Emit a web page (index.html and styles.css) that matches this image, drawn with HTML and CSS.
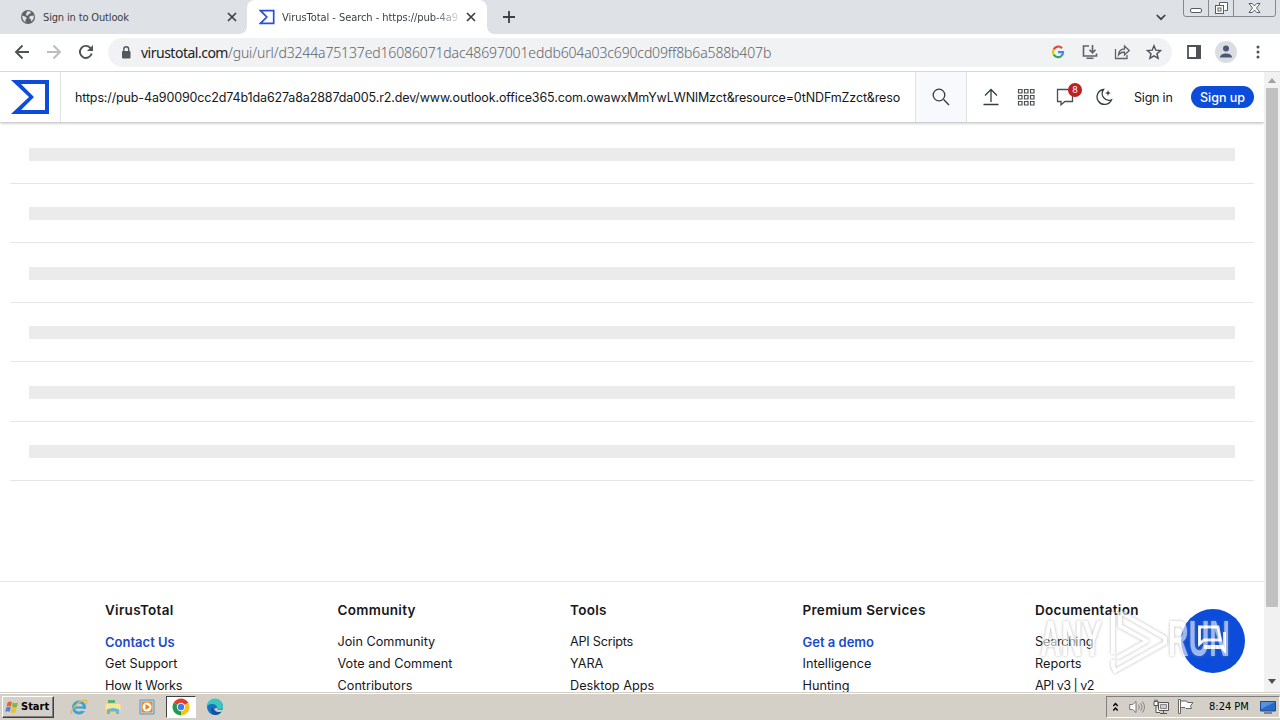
FILE: index.html
```html
<!DOCTYPE html>
<html lang="en">
<head>
    <meta charset="UTF-8">
    <title>VirusTotal - Search</title>
    <link rel="stylesheet" href="styles.css">
</head>
<body>
    <div class="tabstrip">
        <div class="tab">
            <svg class="tab-icon" width="16" height="16" viewBox="0 0 16 16"><circle cx="8" cy="8" r="7" fill="#5f6368"/><path d="M2.2 6.5l3.5 1.2 1.2 1.8-1.5 1.2.2 2.6C3.500 12 2 10 2.200 6.500zM7.500 2.200l3 .4.3 1.700-2 .8-1 1.600-1.800-.5.2-2zM10 7l3.800-.5c.4 2.600-.8 4.800-2.600 6l-.4-2.200L9 9z" fill="#dee1e6"/></svg>
            <span class="tab-title">Sign in to Outlook</span>
            <svg class="close" width="10" height="10" viewBox="0 0 10 10"><path d="M1 1l8 8M9 1L1 9" stroke="#3c4043" stroke-width="1.7"/></svg>
        </div>
        <div class="tab active">
            <svg class="tab-icon" width="16" height="16" viewBox="0 0 16 16"><path d="M1.500 1.700h13.200v12.600H1.500L7.800 8z" fill="none" stroke="#2b50d8" stroke-width="1.700"/></svg>
            <span class="tab-title fade">VirusTotal - Search - https://pub-4a9</span>
            <svg class="close" width="10" height="10" viewBox="0 0 10 10"><path d="M1 1l8 8M9 1L1 9" stroke="#3c4043" stroke-width="1.7"/></svg>
        </div>
        <svg class="new-tab" width="12" height="12" viewBox="0 0 12 12"><path d="M6 0v12M0 6h12" stroke="#3c4043" stroke-width="1.8"/></svg>
        <svg class="tab-search" width="10" height="7" viewBox="0 0 10 7"><path d="M.8 1L5 5.200 9.200 1" fill="none" stroke="#3c4043" stroke-width="1.700"/></svg>
        <svg class="window-buttons" width="94" height="17" viewBox="0 0 94 17"><path d="M.5 0v14q0 2.500 2.500 2.500h87q2.500 0 2.500-2.500V0M25.500 0v16M50.500 0v16" fill="none" stroke="#858a91"/><rect x="7.500" y="8.500" width="11" height="4" rx="1.500" fill="#fff" stroke="#555b63"/><path d="M36.500 5V2.500h8v8h-3" fill="#fff" stroke="#555b63"/><rect x="32.500" y="5.500" width="8" height="8" fill="#fff" stroke="#555b63"/><rect x="35" y="8" width="3" height="3" fill="#fff" stroke="#555b63"/><path d="M66 3.500h3.200l2.300 2.400 2.300-2.400H77l-3.500 4.500 3.500 4.500h-3.200l-2.300-2.400-2.300 2.400H66L69.500 8z" fill="#fff" stroke="#555b63"/></svg>
    </div>

    <div class="toolbar">
        <svg class="nav-icon" width="16" height="16" viewBox="0 0 16 16"><path d="M15 8H2M8.500 1.500L2 8l6.500 6.500" fill="none" stroke="#4e5256" stroke-width="1.900"/></svg>
        <svg class="nav-icon" width="16" height="16" viewBox="0 0 16 16"><path d="M1 8h13M7.500 1.500L14 8l-6.500 6.500" fill="none" stroke="#babcbe" stroke-width="1.900"/></svg>
        <svg class="nav-icon" width="16" height="16" viewBox="0 0 16 16"><path d="M13.700 9.500A6 6 0 1 1 12.300 3.800L14 5.500" fill="none" stroke="#4e5256" stroke-width="1.900"/><path d="M15 1v6H9z" fill="#4e5256"/></svg>
        <div class="omnibox">
            <svg class="lock" width="10" height="13" viewBox="0 0 10 13"><rect x="1" y="5" width="8.500" height="7.500" rx="1" fill="#54585d"/><path d="M2.800 5.500V3.200a2.400 2.400 0 0 1 4.900 0v2.300" fill="none" stroke="#54585d" stroke-width="1.400"/></svg>
            <span class="url"><b>virustotal.com</b>/gui/url/d3244a75137ed16086071dac48697001eddb604a03c690cd09ff8b6a588b407b</span>
            <svg width="14" height="14" viewBox="0 0 14 14"><g fill="none" stroke-width="2.200"><path d="M11 3.200A5 5 0 0 0 2.700 4.500" stroke="#ea4335"/><path d="M2.700 4.500a5 5 0 0 0 0 5" stroke="#fbbc05"/><path d="M2.700 9.500a5 5 0 0 0 7.300 1.800" stroke="#34a853"/><path d="M10 11.300A5 5 0 0 0 12 7.200H7" stroke="#4285f4"/></g></svg>
            <svg width="16" height="16" viewBox="0 0 16 16"><path d="M7 2H1.500v10h13V9.500M4.500 14.200h7M10.500 1v7.500M7.500 5.800l3 3 3-3" fill="none" stroke="#5f6368" stroke-width="1.600"/></svg>
            <svg width="16" height="16" viewBox="0 0 16 16"><path d="M1.500 5v9.500h11.500V11M4.500 11c.3-4 2.500-6 6-6V2l4.700 4.500-4.700 4.500V8C8 8 6 8.800 4.500 11z" fill="none" stroke="#5f6368" stroke-width="1.300"/></svg>
            <svg width="16" height="16" viewBox="0 0 16 16"><path d="M8 1.800l1.800 4.400 4.800.4-3.600 3.100 1.100 4.700L8 11.900l-4.100 2.500L5 9.700 1.400 6.600l4.800-.4z" fill="none" stroke="#4e5256" stroke-width="1.400"/></svg>
        </div>
        <svg class="side-panel" width="14" height="14" viewBox="0 0 14 14"><path d="M1 1h12v12H1z" fill="none" stroke="#4e5256" stroke-width="1.800"/><path d="M9 1h5v12H9z" fill="#4e5256"/></svg>
        <svg class="avatar" width="22" height="22" viewBox="0 0 22 22"><circle cx="11" cy="11" r="11" fill="#dadde2"/><circle cx="11" cy="7.500" r="3" fill="#4a5878"/><path d="M5 16.500c0-5.300 12-5.300 12 0z" fill="#4a5878"/></svg>
        <svg class="menu-dots" width="4" height="14" viewBox="0 0 4 14"><g fill="#4e5256"><circle cx="2" cy="2" r="1.500"/><circle cx="2" cy="7" r="1.500"/><circle cx="2" cy="12" r="1.500"/></g></svg>
    </div>

    <div class="viewport">
        <div class="page">
            <header class="header">
                <a class="logo"><svg width="39" height="34" viewBox="0 0 39 34"><path fill-rule="evenodd" d="M0 0h38v34H0l18-17zM10 4l13 13-13 13h24V4z" fill="#0b4dda"/></svg></a>
                <div class="search-text">https://pub-4a90090cc2d74b1da627a8a2887da005.r2.dev/www.outlook.office365.com.owawxMmYwLWNlMzct&amp;resource=0tNDFmZzct&amp;reso</div>
                <div class="search-button"><svg width="18" height="18" viewBox="0 0 18 18"><path d="M11.600 11.600L17 17" stroke="#363c43" stroke-width="1.400"/><circle cx="7" cy="7" r="5.800" fill="none" stroke="#363c43" stroke-width="1.300"/></svg></div>
                <nav class="actions">
                    <svg width="16" height="18" viewBox="0 0 16 18"><path d="M8 14V1.500M2 7.500l6-6 6 6M.5 16.500h15" fill="none" stroke="#363c43" stroke-width="1.300"/></svg>
                    <svg class="apps" width="18" height="18" viewBox="0 0 18 18"><path d="M1.500 1.500h3.500v3.500h-3.500zM7.500 1.500h3.500v3.500h-3.500zM13.500 1.500h3.500v3.500h-3.500zM1.500 7.500h3.500v3.500h-3.500zM7.500 7.500h3.500v3.500h-3.500zM13.500 7.500h3.500v3.500h-3.500zM1.500 13.500h3.500v3.500h-3.500zM7.500 13.500h3.500v3.500h-3.500zM13.500 13.500h3.500v3.500h-3.500z" fill="none" stroke="#4b5056" stroke-width="1.200"/></svg>
                    <div class="notifications">
                        <svg width="18" height="18" viewBox="0 0 18 18"><path d="M1.500 1.500h15v12H9l-4 3.300v-3.300H1.500z" fill="none" stroke="#4b5056" stroke-width="1.300"/></svg>
                        <span class="badge">8</span>
                    </div>
                    <svg class="moon" width="18" height="18" viewBox="0 0 18 18"><path d="M8.500 1.500a7.500 7.500 0 1 0 8 10.300A6.800 6.800 0 0 1 8.500 1.500z" fill="none" stroke="#363c43" stroke-width="1.300"/><path d="M13 2l.8 2.200 2.200.8-2.200.8L13 8l-.8-2.200L10 5l2.200-.8z" fill="#363c43"/></svg>
                    <span class="sign-in">Sign in</span>
                    <span class="sign-up">Sign up</span>
                </nav>
            </header>

            <main class="results">
                <div class="row"><div class="bar"></div></div>
                <div class="row"><div class="bar"></div></div>
                <div class="row"><div class="bar"></div></div>
                <div class="row"><div class="bar"></div></div>
                <div class="row"><div class="bar"></div></div>
                <div class="row"><div class="bar"></div></div>
            </main>

            <footer class="footer">
                <div class="col">
                    <h4>VirusTotal</h4>
                    <a class="primary">Contact Us</a>
                    <a>Get Support</a>
                    <a class="tight">How It Works</a>
                </div>
                <div class="col">
                    <h4>Community</h4>
                    <a>Join Community</a>
                    <a>Vote and Comment</a>
                    <a>Contributors</a>
                </div>
                <div class="col">
                    <h4>Tools</h4>
                    <a class="tight">API Scripts</a>
                    <a>YARA</a>
                    <a>Desktop Apps</a>
                </div>
                <div class="col">
                    <h4>Premium Services</h4>
                    <a class="primary">Get a demo</a>
                    <a>Intelligence</a>
                    <a>Hunting</a>
                </div>
                <div class="col">
                    <h4>Documentation</h4>
                    <a class="tight">Searching</a>
                    <a>Reports</a>
                    <a class="tighter">API v3 | v2</a>
                </div>
            </footer>

            <div class="chat"><svg width="34" height="32" viewBox="0 0 34 32"><path d="M4.500 3H23l2.500 13H9l-4.500 4z" fill="none" stroke="#fff" stroke-width="2.800"/><path d="M28 8h3v22l-5-5H9v-4h19z" fill="#fff"/></svg></div>
            <svg class="watermark" width="200" height="72" viewBox="0 0 200 72">
                <text x="4" y="51" textLength="62" lengthAdjust="spacingAndGlyphs">ANY</text>
                <path d="M77 7v42M84 7v14l27 15-30 17M84 7l45 26v5L79 66l-2-5V55" fill="none" stroke="#fff" stroke-width="4" stroke-linejoin="round"/>
                <text x="132" y="51" textLength="62" lengthAdjust="spacingAndGlyphs">RUN</text>
            </svg>
        </div>
        <div class="scrollbar">
            <svg width="8" height="5" viewBox="0 0 8 5"><path d="M4 0l4 5H0z" fill="#a3a3a3"/></svg>
            <div class="thumb"></div>
            <svg class="down" width="8" height="5" viewBox="0 0 8 5"><path d="M4 5L0 0h8z" fill="#505050"/></svg>
        </div>
    </div>

    <div class="taskbar">
        <div class="start">
            <svg width="15" height="16" viewBox="0 0 17 16"><path d="M3 2.500c2-1.300 3.500-1 5 0L6.800 7.500c-1.600-1-3-1-5 0z" fill="#e8622c"/><path d="M9 3c2 1 3.700 1 5.700 0l-1.300 5c-2 1-3.700 1-5.500 0z" fill="#79b943"/><path d="M1.600 8.500c2-1 3.400-1 5 0L5.300 13.500c-1.500-1-3-1-5 0z" fill="#4b86cf"/><path d="M7.700 9c1.800 1 3.500 1 5.500 0l-1.400 5c-2 1-3.700 1-5.500 0z" fill="#f3bd2e"/></svg>
            <span>Start</span>
        </div>
        <div class="launch">
            <svg width="18" height="18" viewBox="0 0 18 18"><circle cx="9" cy="9.500" r="5.500" fill="none" stroke="#39a3dc" stroke-width="3"/><path d="M5 9.500h9.500" stroke="#39a3dc" stroke-width="2.200"/><path d="M12 12h4" stroke="#d4d0c8" stroke-width="2"/><path d="M2 16C-1 13 10 .5 16 2.500c1 .5.800 2 0 3.500" fill="none" stroke="#e5bb45" stroke-width="1.400"/></svg>
        </div>
        <div class="launch">
            <svg width="18" height="18" viewBox="0 0 18 18"><path d="M2 3h6l1 2h6v10H2z" fill="#f2d36b"/><path d="M4 2h7v3H4z" fill="#5fae72"/><path d="M1.500 6h15v6h-15z" fill="#f9e798"/><path d="M3 16v-4.500q6-3 12 0V16h-3v-2.500H6V16z" fill="#65b7de"/></svg>
        </div>
        <div class="launch">
            <svg width="18" height="18" viewBox="0 0 18 18"><path d="M2 2h14v14H2z" fill="#b9dbef" stroke="#5796c7"/><rect x="3.500" y="3.500" width="11" height="11" rx="1" fill="#ef8a22"/><circle cx="9" cy="9" r="4.500" fill="#fff"/><path d="M7.500 6l4.500 3-4.500 3z" fill="#ee7c12"/></svg>
        </div>
        <div class="launch running">
            <svg width="18" height="18" viewBox="0 0 18 18"><path d="M9 9L1.640 4.750A8.500 8.500 0 0 1 16.360 4.750L9 9z" fill="#e33b2e"/><path d="M9 9l7.360-4.250A8.500 8.500 0 0 1 9 17.500z" fill="#fbc116"/><path d="M9 9v8.500A8.500 8.500 0 0 1 1.640 4.750z" fill="#229b48"/><circle cx="9" cy="9" r="4.200" fill="#fff"/><circle cx="9" cy="9" r="3.200" fill="#3c7ee8"/></svg>
        </div>
        <div class="launch">
            <svg width="18" height="18" viewBox="0 0 18 18"><circle cx="9" cy="9" r="8" fill="#1475c4"/><path d="M1 8a8 8 0 0 1 16 1c0 3-5 3.500-6 1.500C12 7 6 4 1 8z" fill="#3cc6bd"/><path d="M7 9c-1 4 3 6.500 8.500 4.500-1 2-3.500 3.500-6.500 3.500C4 16 4 10 7 9z" fill="#155299"/><path d="M11 10c0 2.500 3.500 2.500 6 1.500l-1 2c-4 1-7.500 0-7.500-3z" fill="#d4d0c8"/></svg>
        </div>
        <div class="tray">
            <svg class="expand" width="5" height="10" viewBox="0 0 5 10"><path d="M.3 4l2.200-2.400L4.700 4M.3 8.500l2.200-2.400 2.200 2.400" fill="none" stroke="#000" stroke-width="1.400"/></svg>
            <svg class="volume" width="16" height="14" viewBox="0 0 16 14"><path d="M.7 4.500h3L7 1.500v11l-3.300-3h-3z" fill="#fff" stroke="#777"/><path d="M9.500 4.500q1.800 2.500 0 5M11.700 3q3 4 0 8M13.500 1.500q4 5.500 0 11" fill="none" stroke="#888"/></svg>
            <svg class="network" width="16" height="16" viewBox="0 0 16 16"><path d="M5.500 3.500h10v8h-10zM7 14.500h7M10.500 12v2" fill="#eee" stroke="#555"/><path d="M7.500 5.500h6v4h-6z" fill="#ccc" stroke="#888"/><path d="M1 2.500h4v4H1zM2 .5v2M4 .5v2M3 7v6.500h4" fill="#fff" stroke="#555"/></svg>
            <svg class="flag" width="17" height="15" viewBox="0 0 17 15"><path d="M1.500.5h2v14h-2zM3.500 2h6l1 1.500h5.500l-2.500 3.500 1 2.500H9L8 8.500H3.500z" fill="#fff" stroke="#666"/></svg>
            <span class="clock">8:24 PM</span>
            <svg class="desktop" width="16" height="14" viewBox="0 0 16 14"><path d="M.5 1.500h15v9.500H.5z" fill="#2969c4" stroke="#1c4b91"/><path d="M1 2h14L1 9z" fill="#5494df"/><path d="M4 13h8" stroke="#667" stroke-width="1.500"/></svg>
        </div>
    </div>
</body>
</html>
```

FILE: styles.css
```css
* {
    box-sizing: border-box;
}

body {
    margin: 0;
    width: 1280px;
    height: 720px;
    overflow: hidden;
    display: flex;
    flex-direction: column;
    background: #fff;
    font-family: Inter, sans-serif;
}

svg {
    display: block;
    flex: none;
}

/* browser chrome */
.tabstrip {
    display: flex;
    align-items: center;
    height: 34px;
    background: #dee1e6;
    font: 11px "DejaVu Sans Condensed", sans-serif;
    letter-spacing: -0.15px;
    color: #3c4043;
}

.tab {
    display: flex;
    align-items: center;
    width: 247px;
    height: 34px;
    padding: 0 10px 0 20px;
}

.tab.active {
    position: relative;
    width: 240px;
    padding: 0 11px 0 12px;
    background: #fff;
    border-radius: 8px 8px 0 0;
    letter-spacing: -0.05px;
}

.tab.active::before,
.tab.active::after {
    content: "";
    position: absolute;
    bottom: 0;
    width: 7px;
    height: 7px;
}

.tab.active::before {
    left: -7px;
    background: radial-gradient(circle at 0 0, #dee1e6 6.5px, #fff 7px);
}

.tab.active::after {
    right: -7px;
    background: radial-gradient(circle at 100% 0, #dee1e6 6.5px, #fff 7px);
}

.tab-title {
    flex: 1;
    margin-left: 7px;
    overflow: hidden;
    white-space: nowrap;
}

.tab.active .tab-title {
    margin-right: 7px;
}

.fade {
    -webkit-mask-image: linear-gradient(to right, #000 150px, transparent 182px);
    mask-image: linear-gradient(to right, #000 150px, transparent 182px);
}

.new-tab {
    margin-left: 16px;
}

.tab-search {
    margin-left: auto;
}

.window-buttons {
    margin-left: 17px;
    margin-right: 3px;
    align-self: flex-start;
}

.toolbar {
    display: flex;
    align-items: center;
    height: 38px;
    padding: 0 0 1px 14px;
    border-bottom: 1px solid #d5d7da;
    background: #fff;
}

.nav-icon {
    margin-right: 16px;
}

.omnibox {
    display: flex;
    align-items: center;
    gap: 16px;
    width: 1064px;
    height: 29px;
    margin-left: -2px;
    padding: 0 10px 0 13px;
    border-radius: 15px;
    background: #f0f2f4;
}

.omnibox .lock {
    margin-right: -6px;
}

.url {
    flex: 1;
    font: 300 14px "Noto Sans", sans-serif;
    letter-spacing: -0.14px;
    color: #5f6469;
}

.url + svg {
    margin: 0 1px 0 -1px;
}

.url b {
    font-weight: 400;
    letter-spacing: -0.5px;
    color: #202124;
}

.side-panel {
    margin-left: 15px;
}

.avatar {
    margin-left: 14px;
}

.menu-dots {
    margin-left: 19px;
}

/* page */
.viewport {
    display: flex;
    height: 620px;
}

.page {
    position: relative;
    width: 1264px;
    overflow: hidden;
}

.header {
    display: flex;
    height: 50px;
    background: #fff;
    box-shadow: 0 1px 3px rgba(0, 0, 0, 0.3);
}

.logo {
    width: 61px;
    padding: 8px 0 0 11px;
    border-right: 1px solid #dee2e6;
}

.search-text {
    width: 855px;
    padding: 1px 0 0 14px;
    border-right: 1px solid #dee2e6;
    font-size: 12.5px;
    line-height: 50px;
    letter-spacing: -0.135px;
    white-space: nowrap;
    color: #15181c;
}

.search-button {
    display: flex;
    align-items: center;
    justify-content: center;
    width: 51px;
    background: #f8f9fd;
    border-right: 1px solid #dee2e6;
}

.actions {
    display: flex;
    align-items: center;
    flex: 1;
    padding-left: 16px;
    font-size: 12.5px;
    color: #15181c;
}

.apps {
    margin-left: 18px;
}

.notifications {
    position: relative;
    margin-left: 21px;
}

.badge {
    position: absolute;
    left: 12px;
    top: -5px;
    width: 14px;
    height: 14px;
    border-radius: 50%;
    background: #bd1f23;
    color: #fff;
    font-size: 9px;
    line-height: 14px;
    text-align: center;
}

.moon {
    margin-left: 21px;
}

.sign-in {
    width: 57px;
    margin-left: 21px;
    letter-spacing: -0.2px;
    white-space: nowrap;
}

.sign-up {
    width: 63px;
    height: 22px;
    border-radius: 11px;
    background: #0b4dda;
    color: #fff;
    line-height: 23px;
    text-align: center;
    font-weight: 500;
}

.results {
    margin: 2.3px 10px 0;
}

.row {
    height: 59.48px;
    padding: 23.7px 19px 0;
    border-bottom: 1px solid #e6e6e6;
}

.bar {
    height: 13px;
    background: #ebebeb;
}

.footer {
    display: flex;
    height: 120px;
    margin-top: 99.8px;
    padding: 17px 0 0 105px;
    border-top: 1px solid #e3e5e7;
    font-size: 12.7px;
    color: #15181c;
}

.col {
    display: flex;
    flex-direction: column;
    flex: none;
    width: 232.5px;
}

.col h4 {
    margin: 0 0 10px;
    font-size: 13.5px;
    font-weight: 600;
    line-height: 22px;
    letter-spacing: 0.3px;
}

.col a {
    line-height: 22px;
}

.col .primary {
    color: #1c4bc9;
    font-size: 13px;
    font-weight: 600;
}

.col .tight {
    letter-spacing: -0.25px;
}

.col .tighter {
    letter-spacing: -0.55px;
}

.chat {
    position: absolute;
    left: 1181px;
    top: 537px;
    width: 64px;
    height: 64px;
    padding: 15px 0 0 14px;
    border-radius: 50%;
    background: #0b4dda;
}

.watermark {
    position: absolute;
    left: 1036px;
    top: 533px;
    opacity: 0.6;
    filter: drop-shadow(0 0 1.5px #888);
    fill: #fff;
    font: bold 50px "Liberation Sans", sans-serif;
}

.scrollbar {
    display: flex;
    flex-direction: column;
    align-items: center;
    width: 16px;
    padding: 6px 0 8px;
    background: #f1f1f1;
}

.thumb {
    width: 12px;
    height: 519px;
    margin-top: 5px;
    background: #c1c1c1;
}

.down {
    margin-top: auto;
}

/* windows taskbar */
.taskbar {
    display: flex;
    align-items: center;
    height: 28px;
    padding-left: 2px;
    border-top: 1px solid #d4d0c8;
    box-shadow: inset 0 1px #fff;
    background: #d4d0c8;
}

.start {
    display: flex;
    align-items: center;
    gap: 1px;
    width: 52px;
    height: 22px;
    padding-left: 2px;
    border: 1px solid;
    border-color: #fff #404040 #404040 #fff;
    box-shadow: inset -1px -1px #808080;
    font: bold 11px "DejaVu Sans Condensed", sans-serif;
}

.launch {
    display: flex;
    align-items: center;
    justify-content: center;
    width: 30px;
    height: 22px;
    margin-left: 4px;
}

.start + .launch {
    margin-left: 10px;
}

.running {
    background: #fff;
    border: 1px solid;
    border-color: #404040 #fff #fff #404040;
}

.tray {
    display: flex;
    align-items: center;
    width: 174px;
    height: 22px;
    margin-left: auto;
    padding-left: 6px;
    border: 1px solid;
    border-color: #808080 #fff #fff #808080;
    font: 11px "DejaVu Sans Condensed", sans-serif;
}

.volume {
    margin-left: 11px;
}

.network {
    margin-left: 8px;
}

.flag {
    margin-left: 8px;
}

.clock {
    width: 51px;
    margin-left: 15px;
    white-space: nowrap;
}
```
